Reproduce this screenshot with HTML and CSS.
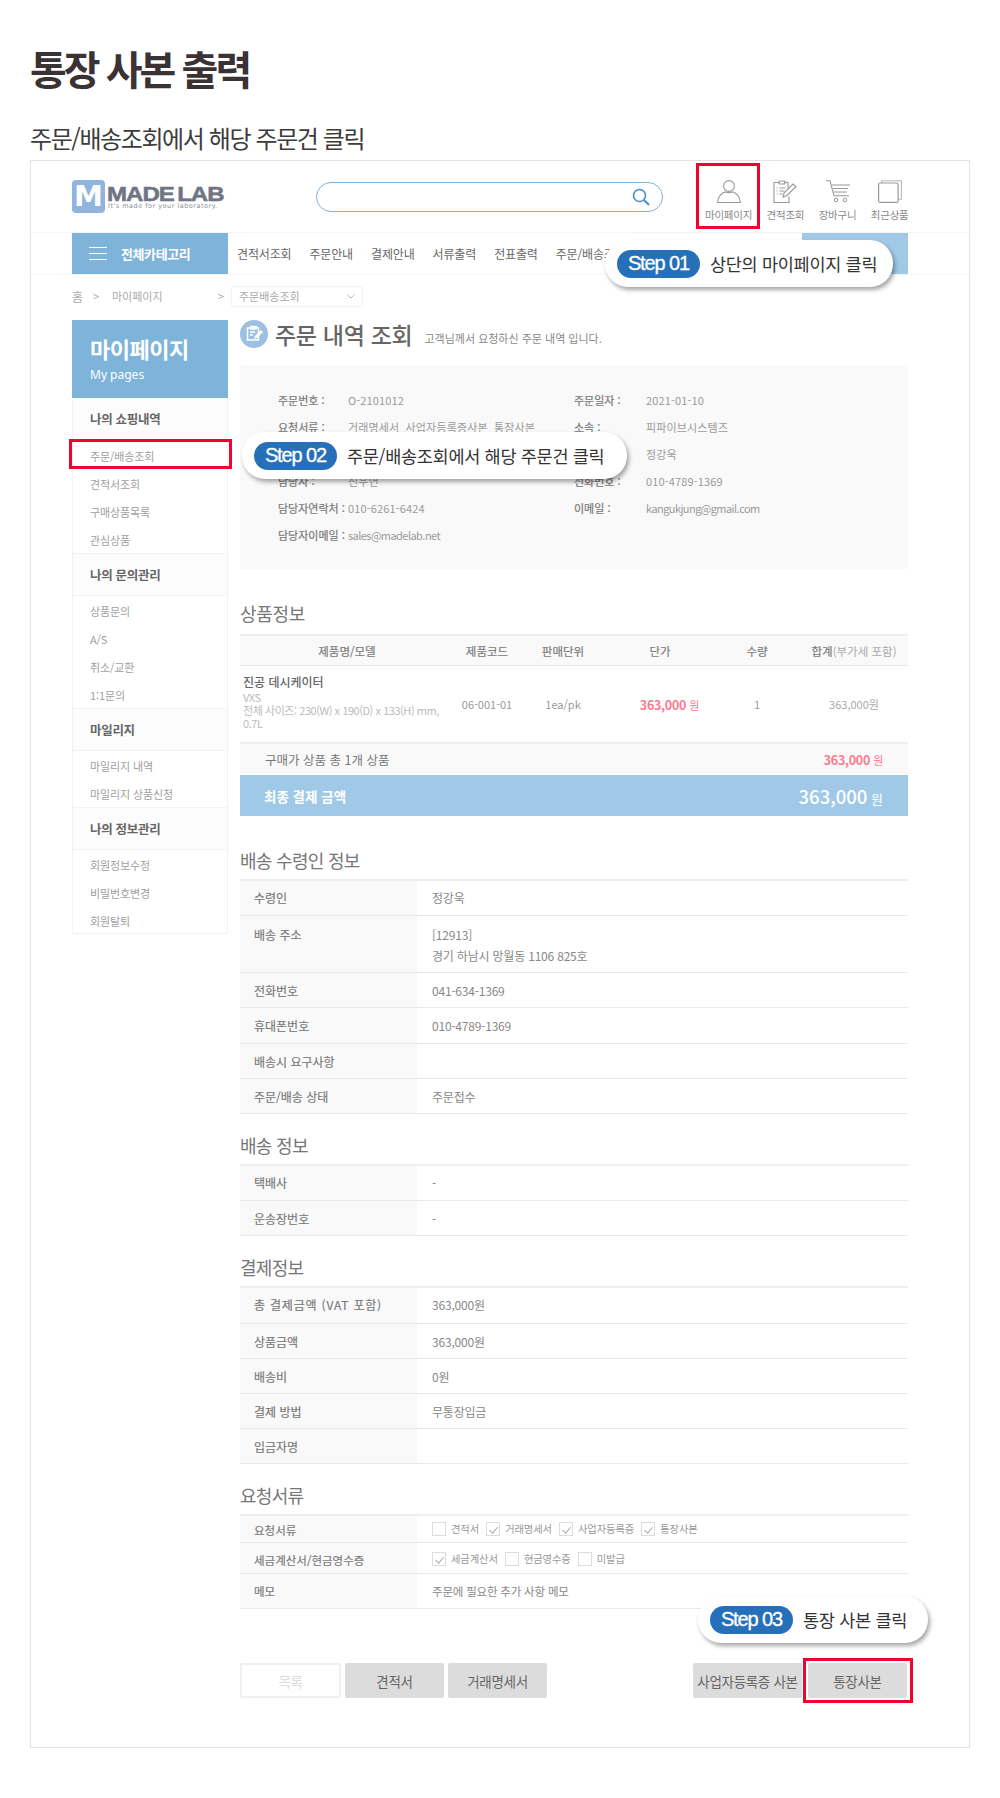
FILE: index.html
```html
<!DOCTYPE html>
<html lang="ko">
<head>
<meta charset="utf-8">
<title>통장 사본 출력</title>
<link rel="stylesheet" href="styles.css">
</head>
<body>
<h1 class="doc-title">통장 사본 출력</h1>
<h2 class="doc-sub">주문/배송조회에서 해당 주문건 클릭</h2>
<div class="frame">
  <header class="top">
    <div class="logo">
      <span class="logo-mark">M</span>
      <div class="logo-text">
        <span class="logo-name">MADE LAB</span>
        <span class="logo-tag">It's made for your laboratory.</span>
      </div>
    </div>
    <div class="search">
      <svg class="search-icon" viewBox="0 0 18 18"><circle cx="7.5" cy="7.5" r="6" fill="none" stroke="#4a8fc4" stroke-width="1.6"/><path d="M12 12l5 5" stroke="#4a8fc4" stroke-width="2" fill="none"/></svg>
    </div>
    <nav class="quick">
      <a class="quick-item">
        <svg class="quick-icon" viewBox="0 0 24 23"><circle cx="12" cy="6" r="5.4" fill="none" stroke="#999" stroke-width="1.1"/><path d="M.6 22.5c.2-6 4.4-10 8-10.6 1.6 1 5.200 1 6.800 0 3.600.6 7.800 4.600 8 10.600z" fill="none" stroke="#999" stroke-width="1.1"/></svg>
        <span>마이페이지</span>
      </a>
      <a class="quick-item">
        <svg class="quick-icon" viewBox="0 0 24 23"><path d="M7 2.500H1v20h15v-6M11 2.500h4v6" fill="none" stroke="#999" stroke-width="1.1"/><path d="M6 1h6v3H6z" fill="none" stroke="#999"/><path d="M3.500 8h1M3.500 11h1M3.500 14h1M6.500 8h6M6.500 11h5M6.500 14h3" stroke="#999"/><path d="M10 17l1-4 9-9 3 2.500-9 9z" fill="none" stroke="#999" stroke-width="1.1"/></svg>
        <span>견적조회</span>
      </a>
      <a class="quick-item">
        <svg class="quick-icon" viewBox="0 0 24 23"><path d="M0 .8h4l4 15h15M6 5h18M7 8.500h15M8 12h13" fill="none" stroke="#999" stroke-width="1.100"/><circle cx="10" cy="20" r="1.800" fill="none" stroke="#999"/><circle cx="19" cy="20" r="1.800" fill="none" stroke="#999"/></svg>
        <span>장바구니</span>
      </a>
      <a class="quick-item">
        <svg class="quick-icon" viewBox="0 0 24 23"><rect x=".6" y="3" width="19.500" height="19.400" rx="1.500" fill="none" stroke="#999" stroke-width="1.200"/><path d="M3.500 3V.8h19.900v18.500h-3.300" fill="none" stroke="#aaa" stroke-width=".9"/></svg>
        <span>최근상품</span>
      </a>
    </nav>
  </header>

  <div class="gnb">
    <a class="gnb-cat"><span class="burger"><i></i><i></i><i></i></span>전체카테고리</a>
    <ul class="gnb-menu">
      <li>견적서조회</li><li>주문안내</li><li>결제안내</li><li>서류출력</li><li>전표출력</li><li>주문/배송조회</li>
    </ul>
    <div class="gnb-side"></div>
  </div>

  <div class="crumbs">
    <span class="crumb-home">홈</span><span class="crumb-sep">&gt;</span><span class="crumb-page">마이페이지</span><span class="crumb-sep2">&gt;</span>
    <div class="crumb-select">주문배송조회<svg class="chev" viewBox="0 0 8 5"><path d="M.5.5l3.500 3.500L7.500.5" fill="none" stroke="#bbb"/></svg></div>
  </div>

  <div class="columns">
    <aside class="side">
      <div class="side-head"><strong>마이페이지</strong><span>My pages</span></div>
      <h4 class="side-sec side-first">나의 쇼핑내역</h4>
      <ul class="side-list"><li>주문/배송조회</li><li>견적서조회</li><li>구매상품목록</li><li>관심상품</li></ul>
      <h4 class="side-sec">나의 문의관리</h4>
      <ul class="side-list"><li>상품문의</li><li>A/S</li><li>취소/교환</li><li>1:1문의</li></ul>
      <h4 class="side-sec">마일리지</h4>
      <ul class="side-list"><li>마일리지 내역</li><li>마일리지 상품신청</li></ul>
      <h4 class="side-sec">나의 정보관리</h4>
      <ul class="side-list"><li>회원정보수정</li><li>비밀번호변경</li><li>회원탈퇴</li></ul>
    </aside>

    <main class="main">
      <div class="page-title">
        <svg class="page-icon" viewBox="0 0 28 28"><circle cx="14" cy="14" r="14" fill="#9dbfe2"/><path d="M9.500 8h9v12h-11V8z" fill="none" stroke="#fff" stroke-width="1.500"/><path d="M11 6.500h5V9h-5zM10 12h5M10 15h3" stroke="#fff" fill="none" stroke-width="1.300"/><path d="M14 19l1-3 6-6 2 2-6 6z" fill="#fff"/></svg>
        <h3>주문 내역 조회</h3>
        <p>고객님께서 요청하신 주문 내역 입니다.</p>
      </div>

      <div class="info">
        <b>주문번호 :</b><span>O-2101012</span><b>주문일자 :</b><span>2021-01-10</span>
        <b>요청서류 :</b><span class="info-docs">거래명세서 사업자등록증사본 통장사본</span><b>소속 :</b><span>피파이브시스템즈</span>
        <b></b><span></span><b></b><span>정강욱</span>
        <b>담당자 :</b><span>신우연</span><b>전화번호 :</b><span>010-4789-1369</span>
        <b>담당자연락처 :</b><span>010-6261-6424</span><b>이메일 :</b><span class="info-mail">kangukjung@gmail.com</span>
        <b>담당자이메일 :</b><span class="info-mail">sales@madelab.net</span><b></b><span></span>
      </div>

      <h3 class="sec-title sec-goods">상품정보</h3>
      <div class="goods">
        <div class="goods-head">
          <span>제품명/모델</span><span>제품코드</span><span>판매단위</span><span>단가</span><span>수량</span><span class="goods-sum">합계<em>(부가세 포함)</em></span>
        </div>
        <div class="goods-row">
          <div class="goods-name"><strong>진공 데시케이터</strong><small>VXS</small><small>전체 사이즈: 230(W) x 190(D) x 133(H) mm, 0.7L</small></div>
          <span>06-001-01</span><span>1ea/pk</span><span class="price">363,000 <i>원</i></span><span>1</span><span class="goods-total">363,000원</span>
        </div>
        <div class="goods-count"><span>구매가 상품 총 1개 상품</span><span class="price">363,000 <i>원</i></span></div>
        <div class="goods-final"><strong>최종 결제 금액</strong><span><b>363,000</b> 원</span></div>
      </div>

      <h3 class="sec-title">배송 수령인 정보</h3>
      <div class="kv">
        <div class="kv-row"><div class="kv-k">수령인</div><div class="kv-v">정강욱</div></div>
        <div class="kv-row kv-addr"><div class="kv-k">배송 주소</div><div class="kv-v">[12913]<br>경기 하남시 망월동 1106 825호</div></div>
        <div class="kv-row"><div class="kv-k">전화번호</div><div class="kv-v">041-634-1369</div></div>
        <div class="kv-row"><div class="kv-k">휴대폰번호</div><div class="kv-v">010-4789-1369</div></div>
        <div class="kv-row"><div class="kv-k">배송시 요구사항</div><div class="kv-v"></div></div>
        <div class="kv-row"><div class="kv-k">주문/배송 상태</div><div class="kv-v">주문접수</div></div>
      </div>

      <h3 class="sec-title">배송 정보</h3>
      <div class="kv">
        <div class="kv-row"><div class="kv-k">택배사</div><div class="kv-v">-</div></div>
        <div class="kv-row"><div class="kv-k">운송장번호</div><div class="kv-v">-</div></div>
      </div>

      <h3 class="sec-title">결제정보</h3>
      <div class="kv">
        <div class="kv-row"><div class="kv-k kv-k-wide">총 결제금액 (VAT 포함)</div><div class="kv-v">363,000원</div></div>
        <div class="kv-row"><div class="kv-k">상품금액</div><div class="kv-v">363,000원</div></div>
        <div class="kv-row"><div class="kv-k">배송비</div><div class="kv-v">0원</div></div>
        <div class="kv-row"><div class="kv-k">결제 방법</div><div class="kv-v">무통장입금</div></div>
        <div class="kv-row"><div class="kv-k">입금자명</div><div class="kv-v"></div></div>
      </div>

      <h3 class="sec-title">요청서류</h3>
      <div class="kv kv-req">
        <div class="kv-row kv-check kv-check-a"><div class="kv-k">요청서류</div><div class="kv-v checks">
          <span class="chk"></span><label>견적서</label><span class="chk on"></span><label>거래명세서</label><span class="chk on"></span><label>사업자등록증</label><span class="chk on"></span><label>통장사본</label>
        </div></div>
        <div class="kv-row kv-check kv-check-b"><div class="kv-k">세금계산서/현금영수증</div><div class="kv-v checks">
          <span class="chk on"></span><label>세금계산서</label><span class="chk"></span><label>현금영수증</label><span class="chk"></span><label>미발급</label>
        </div></div>
        <div class="kv-row kv-memo"><div class="kv-k">메모</div><div class="kv-v">주문에 필요한 추가 사항 메모</div></div>
      </div>

      <div class="actions">
        <div class="btn-group">
          <a class="btn btn-ghost">목록</a><a class="btn">견적서</a><a class="btn">거래명세서</a>
        </div>
        <div class="btn-group btn-group-r">
          <a class="btn btn-wide">사업자등록증 사본</a><a class="btn">통장사본</a>
        </div>
      </div>
    </main>
  </div>

  <div class="mark mark-1"></div>
  <div class="mark mark-2"></div>
  <div class="mark mark-3"></div>

  <div class="step step-1"><span class="step-pill">Step 01</span><span class="step-text">상단의 마이페이지 클릭</span></div>
  <div class="step step-2"><span class="step-pill">Step 02</span><span class="step-text">주문/배송조회에서 해당 주문건 클릭</span></div>
  <div class="step step-3"><span class="step-pill">Step 03</span><span class="step-text">통장 사본 클릭</span></div>
</div>
</body>
</html>
```
FILE: styles.css
```css
* { box-sizing: border-box; }
html, body { margin: 0; padding: 0; }
body {
  background: #fff;
  color: #888;
  font-family: "Noto Sans CJK KR", "Noto Sans", sans-serif;
  font-size: 11px;
  height: 1798px;
  overflow: hidden;
}
h1, h2, h3, h4, p, ul { margin: 0; padding: 0; }
ul { list-style: none; }
em, i { font-style: normal; }

.doc-title {
  margin: 48px 0 0 30px;
  font-size: 40px;
  line-height: 40px;
  font-weight: 700;
  letter-spacing: -3px;
  color: #3a3233;
}
.doc-sub {
  margin: 35px 0 0 30px;
  height: 37px;
  font-size: 24px;
  line-height: 30px;
  font-weight: 400;
  letter-spacing: -1.400px;
  color: #3c3c3c;
}

.frame {
  position: relative;
  margin-left: 30px;
  width: 940px;
  height: 1588px;
  border: 1px solid #e6e4da;
}

/* top bar */
.top {
  display: flex;
  align-items: flex-start;
  height: 71px;
  padding: 19px 0 0 41px;
}
.logo { display: flex; width: 155px; height: 33px; margin-right: 89px; }
.logo-mark {
  width: 33px;
  height: 33px;
  border-radius: 4px;
  background: #8fb5de;
  color: #fff;
  font-family: "DejaVu Sans", sans-serif;
  font-weight: 700;
  font-size: 29px;
  line-height: 33px;
  text-align: center;
}
.logo-text { display: flex; flex-direction: column; margin-left: 2px; }
.logo-name {
  margin-top: 6px;
  font-family: "Liberation Sans", sans-serif;
  font-weight: 700;
  font-size: 20px;
  line-height: 16px;
  color: #6f7584;
  letter-spacing: -.8px;
  word-spacing: -2px;
  -webkit-text-stroke: .5px #6f7584;
  transform: scaleX(1.200);
  transform-origin: left center;
  white-space: nowrap;
}
.logo-tag {
  margin: 1px 0 0 1px;
  font-family: "DejaVu Sans", sans-serif;
  font-size: 6.500px;
  line-height: 7px;
  letter-spacing: .5px;
  color: #8a8f98;
  white-space: nowrap;
}
.search {
  display: flex;
  justify-content: flex-end;
  align-items: center;
  width: 347px;
  height: 30px;
  margin-top: 2px;
  padding-right: 12px;
  border: 1.5px solid #7db3df;
  border-radius: 15px;
}
.search-icon { width: 18px; height: 18px; }
.quick { display: flex; gap: 14.500px; margin-left: 42px; }
.quick-item { display: flex; flex-direction: column; align-items: center; }
.quick-icon { width: 24px; height: 23px; }
.quick-item span {
  margin-top: 5px;
  font-size: 10.500px;
  line-height: 14px;
  color: #888;
  white-space: nowrap;
  letter-spacing: -.25px;
}

/* global nav */
.gnb {
  display: flex;
  height: 43px;
  border-top: 1px solid #f6f6f6;
  border-bottom: 1px solid #f6f6f6;
  padding-left: 41px;
  padding-right: 61px;
}
.gnb-cat {
  display: flex;
  align-items: center;
  width: 156px;
  padding-left: 17px;
  background: #7eb3da;
  color: #fff;
  font-size: 13px;
  font-weight: 700;
  letter-spacing: -.4px;
}
.burger { display: flex; flex-direction: column; gap: 5px; width: 18px; margin-right: 14px; }
.burger i { display: block; height: 1px; background: #fff; }
.gnb-menu { display: flex; align-items: center; gap: 18px; margin-left: 9px; flex: 1; font-size: 12px; color: #666; letter-spacing: -.15px; white-space: nowrap; }
.gnb-side { width: 106px; background: #9fc9e6; }

/* breadcrumb */
.crumbs {
  display: flex;
  align-items: center;
  height: 45px;
  padding: 0 0 3px 41px;
  color: #aaa;
  font-size: 11px;
}
.crumb-home { width: 11px; font-size: 12px; }
.crumb-sep { margin-left: 10px; width: 7px; }
.crumb-page { margin-left: 12px; width: 106px; }
.crumb-sep2 { width: 7px; }
.crumb-select {
  display: flex;
  justify-content: space-between;
  align-items: center;
  width: 132px;
  height: 21px;
  margin-left: 6px;
  padding: 0 7px;
  border: 1px solid #f1f1f1;
  border-radius: 2px;
}
.chev { width: 8px; height: 5px; }

/* columns */
.columns { display: flex; gap: 12px; padding-left: 41px; }
.side {
  width: 156px;
  height: 614px;
  border: 1px solid #f2f2f2;
  border-top: 0;
}
.side-head {
  display: flex;
  flex-direction: column;
  height: 78px;
  margin: 0 -1px;
  padding: 13px 0 0 18px;
  background: #7eb3da;
  color: #fff;
}
.side-head strong { font-size: 22px; line-height: 30px; font-weight: 700; letter-spacing: -.5px; }
.side-head span { margin-top: 3px; font-size: 12px; line-height: 18px; font-family: "Noto Sans", sans-serif; }
.side-sec {
  display: flex;
  align-items: center;
  height: 43px;
  padding-left: 17px;
  background: #fcfcfc;
  border-top: 1px solid #f3f3f3;
  border-bottom: 1px solid #f3f3f3;
  font-size: 12.500px;
  font-weight: 700;
  color: #666;
  letter-spacing: -.3px;
}
.side-first { border-top: 0; padding-bottom: 2px; }
.side-list { padding-top: 1px; }
.side-list li {
  height: 28px;
  padding-left: 17px;
  font-size: 11px;
  line-height: 28px;
  color: #a0a0a0;
  letter-spacing: -.1px;
}
.side-list li:last-child { height: 27px; }

/* main */
.main { width: 668px; }
.page-title { display: flex; align-items: center; height: 28px; }
.page-icon { width: 28px; height: 28px; flex: none; }
.page-title h3 { margin-left: 7px; font-size: 23px; line-height: 27px; font-weight: 500; color: #666; letter-spacing: -.3px; white-space: nowrap; }
.page-title p { margin: 7px 0 0 12px; font-size: 11px; color: #888; white-space: nowrap; }

.info {
  display: grid;
  grid-template-columns: 70px 226px 72px 1fr;
  grid-auto-rows: 27px;
  align-items: center;
  height: 204px;
  margin-top: 17px;
  padding: 21px 0 0 38px;
  background: #f9f9f9;
  font-size: 11px;
  white-space: nowrap;
}
.info b { font-weight: 400; color: #777; -webkit-text-stroke: .2px #777; }
.info span { color: #999; letter-spacing: .15px; }
.info .info-mail { letter-spacing: -.55px; }
.info-docs { word-spacing: 3px; }

.sec-title {
  margin-top: 18px;
  margin-bottom: 6px;
  font-size: 18px;
  line-height: 26px;
  font-weight: 400;
  color: #777;
  letter-spacing: -.7px;
}
.sec-goods { margin-top: 31px; margin-bottom: 8px; letter-spacing: -.3px; }
.goods + .sec-title { margin-top: 31px; }

.goods { border-top: 2px solid #eee; }
.goods-head, .goods-row { display: grid; grid-template-columns: 214px 66px 86px 108px 86px 108px; align-items: center; justify-items: center; }
.goods-head {
  height: 30px;
  background: #f9f9f9;
  border-bottom: 1px solid #e8e8e8;
  font-size: 11.500px;
  color: #777;
  -webkit-text-stroke: .15px #777;
}
.goods-sum em { color: #aaa; -webkit-text-stroke: 0; }
.goods-row {
  height: 78px;
  border-bottom: 2px solid #eee;
  color: #999;
  font-size: 11px;
}
.goods-name { justify-self: start; display: flex; flex-direction: column; width: 205px; padding: 0 0 6px 3px; }
.goods-name strong { font-size: 12px; line-height: 18px; font-weight: 500; color: #666; }
.goods-name small { font-size: 11px; line-height: 13px; color: #bbb; letter-spacing: -.45px; }
.price { color: #ff7a90; font-size: 12.500px; font-weight: 700; letter-spacing: -.3px; }
.price i { font-size: 11px; font-weight: 400; }
.goods-row .price { margin-left: 19px; }
.goods-total { color: #aaa; }
.goods-count {
  display: flex;
  justify-content: space-between;
  align-items: center;
  height: 30px;
  padding: 0 25px;
  background: #f9f9f9;
  color: #777;
  font-size: 12.500px;
}
.goods-final {
  display: flex;
  justify-content: space-between;
  align-items: center;
  height: 41px;
  margin-top: 1px;
  padding: 0 25px 0 24px;
  background: #9fc9e6;
  color: #fff;
  font-size: 13px;
}
.goods-final strong { font-size: 13.500px; font-weight: 700; }
.goods-final b { font-size: 18.500px; font-weight: 500; }

.kv { border-top: 2px solid #eee; }
.kv-row { display: flex; height: 35.200px; border-bottom: 1px solid #e9e9e9; font-size: 12px; line-height: 21px; }
.kv-addr { height: 57px; }
.kv-k { width: 177px; padding: 7px 0 0 14px; background: #f9f9f9; color: #777; -webkit-text-stroke: .15px #777; }
.kv-k-wide { letter-spacing: .8px; }
.kv-v { flex: 1; padding: 7px 0 0 15px; color: #888; letter-spacing: -.2px; }
.kv-row:first-child .kv-k, .kv-row:first-child .kv-v { padding-top: 6px; }
.kv-addr .kv-k, .kv-addr .kv-v { padding-top: 8px; }
.kv-req .kv-row { font-size: 11.500px; }
.kv-req .kv-check-a { height: 27px; }
.kv-req .kv-check-b { height: 31px; }
.kv-req .kv-memo { height: 35px; }
.kv-req .kv-check-a .kv-k { padding-top: 4px; }
.kv-check-b .kv-k { padding-top: 7px; }
.kv-memo .kv-v { font-size: 11.500px; }
.kv-row.kv-check-a .checks { padding-top: 6px; }
.kv-row.kv-check-b .checks { padding-top: 9px; }
.checks { display: flex; align-items: flex-start; font-size: 10.300px; line-height: 14px; }
.checks label { margin: 0 7px 0 5px; color: #999; white-space: nowrap; letter-spacing: -.1px; }
.chk { position: relative; width: 14px; height: 14px; border: 1px solid #ddd; flex: none; }
.chk.on::after {
  content: "";
  position: absolute;
  left: 3.500px;
  top: 1.500px;
  width: 4px;
  height: 7px;
  border: solid #aaa;
  border-width: 0 1px 1px 0;
  transform: rotate(40deg);
}

.actions { display: flex; justify-content: space-between; margin-top: 54px; padding-right: 1px; }
.btn-group { display: flex; gap: 4px; }
.btn-group-r { gap: 6px; }
.btn {
  display: flex;
  align-items: center;
  justify-content: center;
  width: 99px;
  height: 35px;
  background: #dcdcdc;
  border-radius: 2px;
  color: #666;
  font-size: 13.500px;
  letter-spacing: -.3px;
  white-space: nowrap;
}
.btn-ghost { width: 101px; background: #fff; border: 2px solid #f0f0f0; color: #ddd; }
.btn-wide { width: 109px; }

/* overlays */
.mark { position: absolute; border: 3px solid #f0042f; }
.mark-1 { left: 665px; top: 2px; width: 64px; height: 66px; }
.mark-2 { left: 38px; top: 278px; width: 163px; height: 30px; }
.mark-3 { left: 772px; top: 1497px; width: 110px; height: 45px; }

.step {
  position: absolute;
  display: flex;
  align-items: center;
  gap: 10px;
  height: 47px;
  padding-left: 12px;
  background: #fff;
  border-radius: 23px;
  box-shadow: 2px 3px 4px rgba(0, 0, 0, .35);
  white-space: nowrap;
}
.step-pill {
  display: flex;
  align-items: center;
  justify-content: center;
  width: 83px;
  height: 28px;
  border-radius: 14px;
  background: #2670ba;
  color: #fff;
  font-family: "Liberation Sans", sans-serif;
  font-size: 20px;
  letter-spacing: -1.1px;
  -webkit-text-stroke: .3px #fff;
}
.step-text { font-size: 17.500px; color: #333; letter-spacing: -.3px; }
.step-1 { left: 574px; top: 79px; width: 288px; }
.step-2 { left: 211px; top: 271px; width: 385px; }
.step-3 { left: 667px; top: 1435px; width: 230px; }
```
